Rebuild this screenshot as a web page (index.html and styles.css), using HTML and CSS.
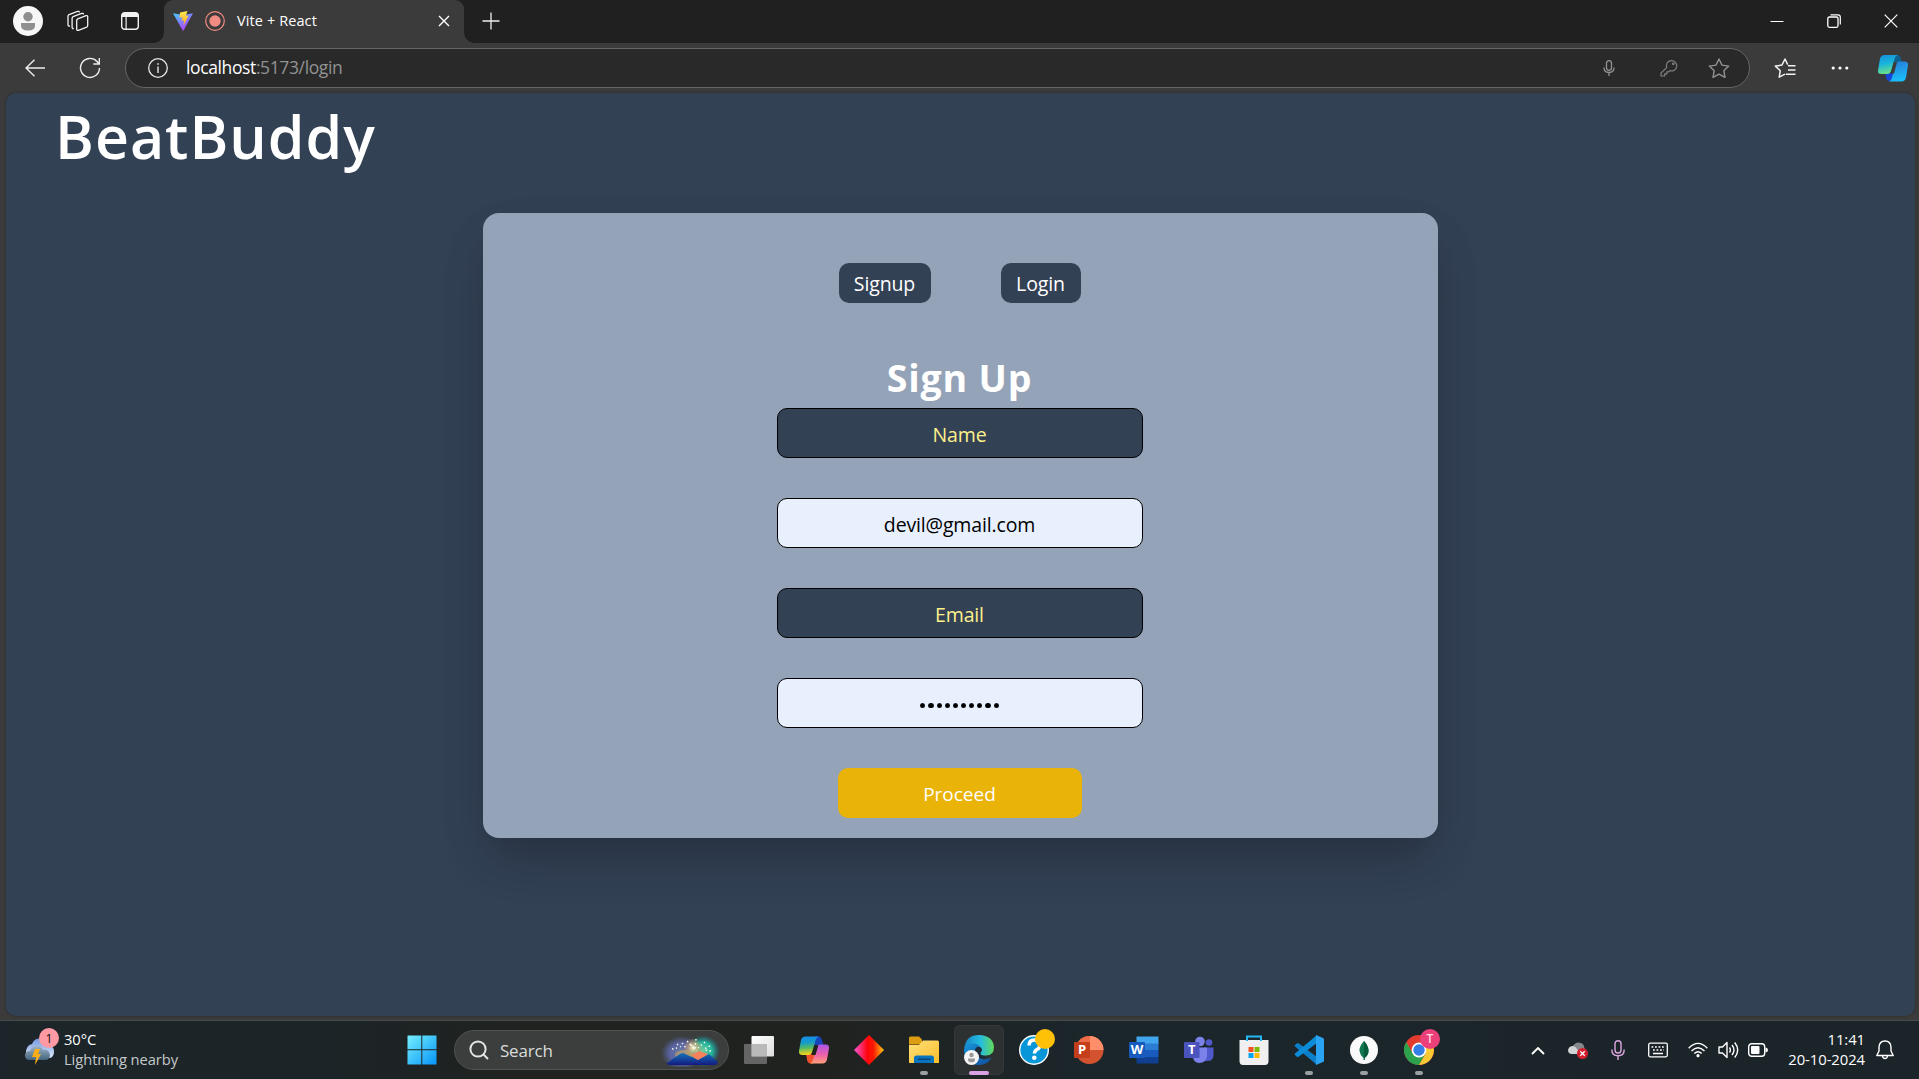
FILE: index.html
```html
<!DOCTYPE html>
<html lang="en">
<head>
<meta charset="utf-8">
<title>Vite + React</title>
<link rel="stylesheet" href="styles.css">
</head>
<body>
<div class="screen">
  <header class="tabstrip">
    <svg class="avatar" width="30" height="30" viewBox="0 0 30 30"><circle cx="15" cy="15" r="15" fill="#f7f7f7"/><circle cx="15" cy="10.700" r="4.700" fill="#8f8f8f"/><path d="M8 17h14v2.500q0 5-7 5t-7-5z" fill="#8f8f8f"/></svg>
    <svg class="workspaces" width="22" height="22" viewBox="0 0 22 22" fill="none" stroke="#f2f2f2" stroke-width="1.300" stroke-linejoin="round"><path d="M9.700 10.500q0-1.200 1-1.700l8.300-3.100q1.700-.5 1.700 1v8.800q0 1.200-1 1.700l-8.300 3.100q-1.700.5-1.700-1z"/><path d="M6.800 18.500q-1.700.3-1.700-1V8.300q0-1.200 1-1.700l8.600-3.200q1.700-.5 1.700 1"/><path d="M3 16q-2 .2-2-1V6.300q0-1.200 1-1.700l8.600-3.200q1.700-.5 1.700 1"/></svg>
    <svg class="tabmenu" width="18" height="18" viewBox="0 0 18 18"><rect x=".7" y=".7" width="16.600" height="16.600" rx="3" fill="none" stroke="#f2f2f2" stroke-width="1.400"/><path d="M1 5V3q0-2 2-2h12q2 0 2 2v2zM4.500 5h1.200v12H4.500z" fill="#f2f2f2"/></svg>
    <div class="tab">
      <svg width="20" height="20" viewBox="0 0 20 20"><defs><linearGradient id="va" x2=".7" y2="1"><stop stop-color="#41d1ff"/><stop offset="1" stop-color="#bd34fe"/></linearGradient><linearGradient id="vb" x2="0" y2="1"><stop stop-color="#ffea55"/><stop offset="1" stop-color="#ffa51a"/></linearGradient></defs><path d="M0 2.200l10 1.700 10-1.700L10.500 19.600h-.8z" fill="url(#va)"/><path d="M7 1.500L14.500 0l-1.700 4.800 2.800-.4-5 10 .4-5-2.500.4 1-3.600-3 .6z" fill="url(#vb)"/></svg>
      <svg class="record" width="20" height="20" viewBox="0 0 20 20"><circle cx="10" cy="10" r="9.300" fill="none" stroke="#f28b82" stroke-width="1.200"/><circle cx="10" cy="10" r="5.700" fill="#f28b82"/></svg>
      <span class="tab-title">Vite + React</span>
      <svg class="tab-close" width="12" height="12" viewBox="0 0 12 12"><path d="M1 1l10 10M11 1L1 11" stroke="#fff" stroke-width="1.400"/></svg>
    </div>
    <svg class="newtab" width="18" height="18" viewBox="0 0 18 18"><path d="M9 .5v17M.5 9h17" stroke="#eee" stroke-width="1.300"/></svg>
    <div class="winbuttons">
      <svg width="14" height="14" viewBox="0 0 14 14"><path d="M.5 7.500h13" stroke="#fff"/></svg>
      <svg width="14" height="14" viewBox="0 0 14 14" fill="none" stroke="#fff"><rect x=".8" y="3" width="10.200" height="10.300" rx="1.500" stroke-width="1.300"/><path d="M3.500.8H11q2.300 0 2.300 2.300v7.500" stroke-width="1.200"/></svg>
      <svg width="14" height="14" viewBox="0 0 14 14"><path d="M.7.700l12.600 12.600M13.300.700L.7 13.300" stroke="#fff" stroke-width="1.200"/></svg>
    </div>
  </header>
  <nav class="toolbar">
    <svg class="back" width="20" height="18" viewBox="0 0 20 18" fill="none" stroke="#eee" stroke-width="1.400"><path d="M20 9H1M9.500.7L1 9l8.500 8.300"/></svg>
    <svg class="reload" width="22" height="22" viewBox="0 0 22 22" fill="none" stroke="#eee" stroke-width="1.400"><path d="M20.500 11a9.500 9.500 0 1 1-2.500-6.500l2 2.200M20.300 1v6h-6"/></svg>
    <div class="address">
      <svg class="info" width="20" height="20" viewBox="0 0 20 20"><circle cx="10" cy="10" r="9.300" fill="none" stroke="#e6e6e6" stroke-width="1.300"/><path d="M9.300 8.500h1.400V15H9.300zM9.200 5.200h1.600v1.600H9.200z" fill="#e6e6e6"/></svg>
      <span class="url"><b>localhost</b>:5173/login</span>
      <div class="address-icons">
        <svg class="mic" width="12" height="16" viewBox="0 0 12 16" fill="none" stroke="#929292" stroke-width="1.300"><rect x="3.500" y=".7" width="5" height="9.600" rx="2.500"/><path d="M1 7.500q0 5 5 5t5-5M6 12.500V16"/></svg>
        <svg class="key" width="18" height="18" viewBox="0 0 18 18" fill="none" stroke="#808080" stroke-width="1.200" stroke-linejoin="round"><path d="M6.700 8.600a5.200 5.200 0 1 1 3 3L8.500 12.800H6.800v2H4.700V17H1v-3z"/><circle cx="13.300" cy="4.800" r=".8"/></svg>
        <svg class="star" width="22" height="20" viewBox="0 0 22 20" fill="none" stroke="#929292" stroke-width="1.400" stroke-linejoin="round"><path d="M11 1l3 6.100 6.700 1-4.900 4.600 1.200 6.600-6-3.200-6 3.200 1.200-6.600L1.300 8.100l6.700-1z"/></svg>
      </div>
    </div>
    <svg class="favs" width="22" height="20" viewBox="0 0 22 20" fill="none" stroke="#f2f2f2" stroke-width="1.500" stroke-linejoin="round"><path d="M11 16.200l-5.800 3 1.100-6.500L1.400 8.100l6.500-1L11 1l2.700 5.600M14 7.800h7.500M14 12h7.500M11.800 16.200h9.700"/></svg>
    <svg class="dots" width="18" height="6" viewBox="0 0 18 6" fill="#fff"><circle cx="2.200" cy="3" r="1.600"/><circle cx="9" cy="3" r="1.600"/><circle cx="15.800" cy="3" r="1.600"/></svg>
    <svg class="copilot" width="32" height="28" viewBox="0 0 32 28"><defs><linearGradient id="ca" x2=".2" y2="1"><stop stop-color="#168fd9"/><stop offset=".5" stop-color="#18b4dd"/><stop offset="1" stop-color="#68de8b"/></linearGradient><linearGradient id="cb" x2=".2" y2="1"><stop stop-color="#287bd8"/><stop offset="1" stop-color="#1bbdf8"/></linearGradient></defs><path d="M16 1h4q3 0 3.800 3L25 8h-9z" fill="#0c618e"/><path d="M8 19h9l-2 8h-2.500q-2.500 0-3.300-3z" fill="#1846d7"/><path d="M7.500 1H21q-3 1-3.500 4l-3 11q-1 4-4.500 4H4.500Q.5 20 1 16.500L3 4.500Q4 1 7.500 1z" fill="url(#ca)"/><path d="M22.500 7.500h5q4 0 3.500 4l-2 12q-1 4-4.500 4H12q2.500-1 3-4l3-12q1-4 4.500-4z" fill="url(#cb)"/><path d="M16.700 8.500h3.300l-3 11h-3.600z" fill="#3b3b3b"/></svg>
  </nav>
  <main class="page">
    <h1 class="brand">BeatBuddy</h1>
    <section class="card">
      <div class="switch"><button class="pill signup">Signup</button><button class="pill login">Login</button></div>
      <h2 class="heading">Sign Up</h2>
      <form class="form">
        <div class="field dark name">Name</div>
        <div class="field light mail">devil@gmail.com</div>
        <div class="field dark email">Email</div>
        <div class="field light secret"><i></i><i></i><i></i><i></i><i></i><i></i><i></i><i></i><i></i><i></i></div>
        <button class="proceed" type="button">Proceed</button>
      </form>
    </section>
  </main>
  <footer class="taskbar">
    <div class="weather">
      <div class="weather-icon">
        <svg width="32" height="30" viewBox="0 0 32 30"><defs><linearGradient id="wa" x2="0" y2="1"><stop stop-color="#7798df"/><stop offset="1" stop-color="#dce9fa"/></linearGradient><linearGradient id="wb" x2="0" y2="1"><stop stop-color="#9eb4c8"/><stop offset="1" stop-color="#45657e"/></linearGradient></defs><path d="M2 14Q3 8 8 7q3-7 11-5 5 1 6 6 6 2 5 8-1 5-5 5H8q-7 0-6-7z" fill="url(#wa)"/><path d="M6 23q-5 0-5-4.500T6 14q2-5 7-5 4 0 6 4 6-1 7 5 0 5-5 5z" fill="url(#wb)"/><path d="M11 12h5l-2 5h3l-6 11 1-8H8z" fill="#ffae18"/></svg>
        <span class="badge">1</span>
      </div>
      <div class="weather-text"><span class="temp">30°C</span><span class="cond">Lightning nearby</span></div>
    </div>
    <div class="apps">
      <div class="app start"><svg width="30" height="30" viewBox="0 0 30 30"><defs><linearGradient id="wi" x2="1" y2="1"><stop stop-color="#74efff"/><stop offset="1" stop-color="#0795f7"/></linearGradient></defs><path d="M1 .5h13.300v13.800H.5V1zM15.300.5H29.500v13.800H15.300zM.5 15.300h13.800v14.200H.5zM15.300 15.300h14.200v14.200H15.300z" fill="url(#wi)"/></svg></div>
      <div class="search">
        <svg width="20" height="20" viewBox="0 0 20 20" fill="none" stroke="#e3e5e5" stroke-width="2"><circle cx="9" cy="9" r="7.600"/><path d="M14 14l5 5"/></svg>
        <span>Search</span>
        <svg class="fireworks" width="58" height="32" viewBox="0 0 58 32"><defs><radialGradient id="f1"><stop stop-color="#6d7fa8"/><stop offset=".6" stop-color="#5a62a0"/><stop offset="1" stop-color="#526298" stop-opacity="0"/></radialGradient><radialGradient id="f2"><stop stop-color="#6fcfa0"/><stop offset=".55" stop-color="#23b39b"/><stop offset="1" stop-color="#1a7e95" stop-opacity="0"/></radialGradient><radialGradient id="f4"><stop stop-color="#fff0c8"/><stop offset=".5" stop-color="#e6b076" stop-opacity=".6"/><stop offset="1" stop-color="#e09a60" stop-opacity="0"/></radialGradient><linearGradient id="f3" x2="0" y2="1"><stop stop-color="#1272b8"/><stop offset="1" stop-color="#141a80"/></linearGradient></defs><ellipse cx="20" cy="18" rx="21" ry="17" fill="url(#f1)"/><ellipse cx="41" cy="16" rx="17" ry="16" fill="url(#f2)"/><ellipse cx="31" cy="13" rx="10" ry="10" fill="url(#f4)"/><ellipse cx="22" cy="20" rx="9" ry="5" fill="#d8ae55" opacity=".5"/><path d="M29 20l8 7 9-8-9-3z" fill="#f5825c"/><path d="M4 29l8-6 6-4 3-1 15 7 11-6 9 8q-1 3-4 3H8q-3 0-4-2z" fill="url(#f3)"/><path d="M25 6l7 7M34 4l-1 9M43 7l-7 6M48 11l-6 3M49 16l-6-1M15 9l4 3M10 14l5-1M20 8l4 5M29 10l6 6" stroke="#f5fff2" stroke-width="1.400" stroke-dasharray="1.500 2.500"/></svg>
      </div>
      <div class="app first"><svg width="30" height="28" viewBox="0 0 30 28"><defs><linearGradient id="ta" x2="1" y2="1"><stop stop-color="#fff"/><stop offset="1" stop-color="#ddd"/></linearGradient></defs><rect x="7.500" width="22.500" height="20.500" rx="1" fill="url(#ta)"/><rect y="8" width="23" height="20" rx="1" fill="#777" fill-opacity=".8"/><path d="M7.500 8H23v12.500H7.500z" fill="#b9b9b9"/></svg></div>
      <div class="app"><svg width="32" height="28" viewBox="0 0 32 28"><defs><linearGradient id="co1" x2=".1" y2="1"><stop stop-color="#168de9"/><stop offset=".35" stop-color="#139acc"/><stop offset=".65" stop-color="#55bb62"/><stop offset="1" stop-color="#f7d51d"/></linearGradient><linearGradient id="co2" x2="0" y2="1"><stop stop-color="#ad55e8"/><stop offset=".55" stop-color="#ed62a7"/><stop offset="1" stop-color="#ffa078"/></linearGradient></defs><path d="M16 .5h4q3 0 3.800 3L25.500 9H16z" fill="#1844ba"/><path d="M8 18h9l-2 9.500h-2.500q-2.500 0-3.300-3z" fill="#f0512a"/><path d="M7.500.5H21q-3 1-3.500 4L14.500 15q-1 4-4.500 4H4.500Q.5 19 1 15L3 4Q4 .5 7.500.5z" fill="url(#co1)"/><path d="M22.500 8.500h5q4 0 3.500 4l-2 11q-1 4-4.500 4H12q2.500-1 3-4l3-11q1-4 4.500-4z" fill="url(#co2)"/><path d="M16.500 9.500h3.800l-2.800 9.500h-4z" fill="#20241f"/></svg></div>
      <div class="app"><svg width="30" height="30" viewBox="0 0 30 30"><defs><linearGradient id="di"><stop stop-color="#fa55db"/><stop offset=".45" stop-color="#ff050b"/><stop offset=".65" stop-color="#fa1a00"/><stop offset="1" stop-color="#ffcd13"/></linearGradient></defs><path d="M15 0l15 15-15 15L0 15z" fill="url(#di)"/></svg></div>
      <div class="app"><svg width="30" height="28" viewBox="0 0 30 28"><defs><linearGradient id="fo" x2="1" y2="1"><stop stop-color="#ffe17b"/><stop offset="1" stop-color="#f9bd2b"/></linearGradient></defs><path d="M0 2q0-1.500 1.500-1.500H10l3 3v5H0z" fill="#dd9d12"/><path d="M0 9h10l4-4.500h14.500q1.500 0 1.500 1.500V27H0z" fill="url(#fo)"/><path d="M5 27v-5q0-2.500 2.500-2.500h15Q25 19.500 25 22v5z" fill="#0874be"/><path d="M9 22.500h12.500v1.500H9z" fill="#06477f"/></svg><span class="run"></span></div>
      <div class="app"><div class="active"></div><svg width="30" height="30" viewBox="0 0 30 30"><defs><linearGradient id="ed" x2="1"><stop stop-color="#1787c9"/><stop offset=".55" stop-color="#26bce0"/><stop offset="1" stop-color="#61da56"/></linearGradient><linearGradient id="ee" x2="1" y2="1"><stop stop-color="#1598df"/><stop offset="1" stop-color="#144c98"/></linearGradient></defs><path d="M0 15Q1 7 9 7q9 0 9 8l-4 4q1 5 8 5 3 0 5.500-1.500Q24 30 15 30 1 30 0 15z" fill="url(#ee)"/><path d="M.3 13Q2 0 15 0q14 .5 15 12 0 8.500-8 8.500-6 0-6-2 2-2 1-5-2-5-8-5-6 0-8.700 4.500z" fill="url(#ed)"/><path d="M11 15q1-3.500 4-3.200 3 .7 3 4-2 2-1.500 3.200 1 2 5 2l-1 3.500q-9-1-9.500-9.500z" fill="#1e2b38"/><circle cx="7.500" cy="22.500" r="7.500" fill="#f5f5f5"/><circle cx="7.500" cy="20" r="2.200" fill="#999"/><path d="M4 23.500h7v1.200q0 2.600-3.500 2.600T4 24.700z" fill="#999"/></svg><span class="run selected"></span></div>
      <div class="app"><svg width="36" height="36" viewBox="0 0 36 36"><circle cx="15" cy="21" r="14.300" fill="#0796d7" stroke="#fff" stroke-width="1.400"/><path d="M10 16.500Q10 11 15.500 11t5.500 5q0 3-3 4.500-2.500 1.400-2.500 4" fill="none" stroke="#fff" stroke-width="3.500"/><circle cx="15.300" cy="28.800" r="2.300" fill="#fff"/><circle cx="26" cy="10" r="10" fill="#ffc107"/></svg></div>
      <div class="app"><svg width="30" height="28" viewBox="0 0 30 28"><circle cx="15.500" cy="14" r="14" fill="#d35230"/><path d="M15.500 0a14 14 0 0 1 14 14h-14z" fill="#ff8f6b"/><path d="M15.500 0v14h-14a14 14 0 0 1 14-14z" fill="#ed6c47"/><rect y="6" width="16" height="16" rx="1" fill="#c43e1c"/><text class="glyph" x="8" y="18.200" text-anchor="middle">P</text></svg></div>
      <div class="app"><svg width="30" height="28" viewBox="0 0 30 28"><path d="M7.500.5h22V8h-22z" fill="#41a5ee"/><path d="M7.500 7.500h22V14h-22z" fill="#2b7cd3"/><path d="M7.500 14h22v7h-22z" fill="#185abd"/><path d="M7.500 21h22v6.500h-22z" fill="#103f91"/><rect y="6" width="16" height="16" rx="1" fill="#185abd"/><text class="glyph" x="8" y="18" text-anchor="middle">W</text></svg></div>
      <div class="app"><svg width="30" height="28" viewBox="0 0 30 28"><circle cx="16" cy="5.500" r="4.800" fill="#7b83eb"/><circle cx="25" cy="6.500" r="3.300" fill="#5059c9"/><path d="M20 11.500h9.500V20q-.5 5-6 5H20z" fill="#5059c9"/><path d="M9 11.500h14V20q-1 7-7.500 7T9 20z" fill="#7b83eb"/><rect y="6" width="15.500" height="16" rx="1" fill="#4b53bc"/><text class="glyph" x="7.800" y="18.200" text-anchor="middle">T</text></svg></div>
      <div class="app"><svg width="30" height="30" viewBox="0 0 30 30"><path d="M.5 5h29v21q0 4-3.500 4H4Q.5 30 .5 26z" fill="#f0f0f0"/><path d="M8 6V1.500h14V6" fill="none" stroke="#25b7f3" stroke-width="2"/><path d="M9.500 12h5v5h-5z" fill="#f25022"/><path d="M15.500 12h5v5h-5z" fill="#7fba00"/><path d="M9.500 18h5v5h-5z" fill="#00a4ef"/><path d="M15.500 18h5v5h-5z" fill="#ffb900"/></svg></div>
      <div class="app"><svg width="30" height="30" viewBox="0 0 30 30"><path d="M1 10l2-1.800q.8-.5 1.600 0L23 22v8L1 11.500q-.8-.8 0-1.500z" fill="#0d7fc9"/><path d="M1 20l2 1.800q.8.500 1.600 0L23 8V0L1 18.500q-.8.800 0 1.500z" fill="#0c8cd8"/><path d="M22 0l7 3q1 .6 1 1.600v20.800q0 1-1 1.600l-7 3z" fill="#2aa3f2"/></svg><span class="run"></span></div>
      <div class="app"><svg width="28" height="28" viewBox="0 0 28 28"><circle cx="14" cy="14" r="14" fill="#fafafa"/><path d="M14 5q-5 5.500-4.500 10 .5 4 4 7V24h1v-2q4-3 4-7 0-5-4.500-10z" fill="#10774e"/><path d="M14 5v19h.6v-2q4-3 3.900-7 0-5-4.500-10z" fill="#075c3b"/></svg><span class="run"></span></div>
      <div class="app"><svg width="36" height="36" viewBox="0 0 36 36"><circle cx="15" cy="21" r="15" fill="#e33b2e"/><path d="M2.300 13A15 15 0 0 0 15 36l6.800-12L9 25z" fill="#2ca24c"/><path d="M15 14h13.200A15 15 0 0 1 15 36l7-12z" fill="#fcc934"/><circle cx="15" cy="21" r="7.400" fill="#fff"/><circle cx="15" cy="21" r="5.700" fill="#357ee8"/><circle cx="26" cy="10" r="10" fill="#ec407a"/><text class="profile" x="26" y="14.200" text-anchor="middle">T</text></svg><span class="run"></span></div>
    </div>
    <div class="tray">
      <svg class="chev" width="14" height="9" viewBox="0 0 14 9" fill="none" stroke="#fff" stroke-width="1.900"><path d="M1 8l6-6 6 6"/></svg>
      <svg class="cloud" width="20" height="18" viewBox="0 0 20 18"><path d="M1 9q1-3 4-4Q8 0 13 2q3 1 3 4 2 2 1 5L7 13z" fill="#848a8c"/><path d="M4 13q-4 0-4-4 1-4 5-4 2 0 4 3l4 5z" fill="#d1d4d5"/><circle cx="14.500" cy="12.500" r="5.500" fill="#d51e2e"/><path d="M12.300 10.300l4.400 4.400m0-4.400l-4.400 4.400" stroke="#fff" stroke-width="1.300"/></svg>
      <svg class="tmic" width="14" height="20" viewBox="0 0 14 20" fill="none" stroke="#dba5df" stroke-width="1.400"><rect x="4" y=".7" width="6" height="12.300" rx="3"/><path d="M.8 9.500q0 6.300 6.200 6.300t6.200-6.300M7 16v4"/></svg>
      <svg class="kbd" width="20" height="16" viewBox="0 0 20 16" fill="none" stroke="#fff" stroke-width="1.300"><rect x=".7" y="1.200" width="18.600" height="13.600" rx="1.500"/><path d="M3.500 5h13M5 8h11" stroke-dasharray="1.800 1.700" stroke-width="1.600"/><path d="M5 11.500h10" stroke-width="1.500"/></svg>
      <svg class="wifi" width="20" height="16" viewBox="0 0 20 16" fill="none" stroke="#fff" stroke-width="1.400"><path d="M.7 6.200q9.300-9.600 18.600 0M3.500 9q6.500-6.600 13 0M6.300 11.600q3.700-3.500 7.400 0"/><circle cx="10" cy="13.700" r="1.600" fill="#fff" stroke="none"/></svg>
      <svg class="sound" width="21" height="18" viewBox="0 0 21 18" fill="none" stroke="#fff" stroke-width="1.400" stroke-linejoin="round"><path d="M1 6h3.500L9 1.500v15L4.500 12H1zM11.500 6.500q1.800 2.500 0 5M14 4q4 5 0 10M16.700 1.500q6 7.500 0 15"/></svg>
      <svg class="battery" width="20" height="14" viewBox="0 0 20 14"><rect x=".7" y=".7" width="16" height="12.600" rx="3" fill="none" stroke="#fff" stroke-width="1.400"/><rect x="3" y="3" width="8.500" height="8" rx="1" fill="#fff"/><path d="M17.500 4.500q2.500.3 2.500 2.500t-2.500 2.500z" fill="#fff"/></svg>
      <div class="clock"><span class="time">11:41</span><span class="date">20-10-2024</span></div>
      <svg class="bell" width="18" height="20" viewBox="0 0 18 20" fill="none" stroke="#fff" stroke-width="1.400" stroke-linejoin="round"><path d="M3 7.200Q3.300 1 9 1t6 6.200V11l2.200 4.500H.8L3 11zM6.500 16q.3 2.500 2.500 2.500t2.500-2.500"/></svg>
    </div>
  </footer>
</div>
</body>
</html>
```
FILE: styles.css
```css
* { box-sizing: border-box; }
body { margin: 0; overflow: hidden; font-family: "Open Sans", "Noto Sans", sans-serif; background: #3b3b3b; }
svg { display: block; flex: none; }
.screen { width: 1919px; height: 1079px; display: flex; flex-direction: column; background: #3b3b3b; }

.tabstrip { height: 43px; flex: none; display: flex; align-items: center; padding-bottom: 1px; background: #202020; }
.avatar { margin-left: 13px; }
.workspaces { margin-left: 24px; }
.tabmenu { margin-left: 32px; }
.tab { position: relative; width: 300px; height: 43px; margin: 0 0 -1px 25px; padding: 0 14px 1px 9px; display: flex; align-items: center; background: #3b3b3b; border-radius: 9px 9px 0 0; }
.tab::before, .tab::after { content: ""; position: absolute; bottom: 0; width: 10px; height: 10px; }
.tab::before { left: -10px; background: radial-gradient(circle at 0 0, transparent 9.500px, #3b3b3b 10px); }
.tab::after { right: -10px; background: radial-gradient(circle at 100% 0, transparent 9.500px, #3b3b3b 10px); }
.record { margin-left: 12px; }
.tab-title { margin-left: 12px; font-size: 14.500px; line-height: 18px; padding-bottom: 1px; color: #fff; letter-spacing: .1px; white-space: nowrap; }
.tab-close { margin-left: auto; }
.newtab { margin-left: 18px; }
.winbuttons { margin-left: auto; margin-right: 21px; display: flex; gap: 43px; }

.toolbar { height: 50px; flex: none; display: flex; align-items: center; }
.toolbar > svg { margin-bottom: 1px; }
.toolbar .back { margin-left: 25px; }
.toolbar .reload { margin-left: 34px; }
.address { width: 1625px; height: 40px; margin-left: 24px; padding: 0 0 1px 22px; display: flex; align-items: center; background: #292929; border: 1px solid #666; border-radius: 20px; }
.url { margin-left: 18px; font-size: 17.500px; line-height: 24px; padding-bottom: 1px; letter-spacing: -.38px; color: #929292; white-space: nowrap; }
.url b { font-weight: 400; color: #fff; }
.address-icons { margin-left: auto; margin-right: 19px; display: flex; align-items: center; }
.key { margin-left: 45px; }
.star { margin-left: 30px; }
.favs { margin-left: 24px; }
.dots { margin-left: 35px; }
.copilot { margin-left: 28px; }

.page { width: 1909px; height: 923px; flex: none; margin-left: 6px; display: flex; flex-direction: column; align-items: center; background: #334155; border-radius: 10px; overflow: hidden; box-shadow: 0 0 3px rgba(0, 0, 0, .3); }
.brand { align-self: flex-start; width: 330px; height: 80px; margin: 3px 0 0 49px; font-size: 59px; line-height: 80px; font-weight: 600; letter-spacing: 1px; color: #fff; white-space: nowrap; }
.card { width: 955px; height: 625px; flex: none; margin-top: 37px; padding: 50px 2px 0 0; display: flex; flex-direction: column; align-items: center; background: #94a3b8; border-radius: 16px; box-shadow: 0 25px 50px -12px rgba(0, 0, 0, .25), 0 20px 50px rgba(0, 0, 0, .06); }
.switch { display: flex; gap: 70px; }
.pill { height: 40px; padding: 1px 0 0; border: 0; border-radius: 10px; background: #334155; color: #fff; font: 19.500px/39px "Open Sans", sans-serif; letter-spacing: -.12px; }
.signup { width: 92px; }
.login { width: 80px; }
.heading { height: 60px; margin: 45px 0 0; font-size: 37.500px; line-height: 59px; font-weight: 700; letter-spacing: .8px; color: #fff; white-space: nowrap; }
.form { display: flex; flex-direction: column; align-items: center; gap: 40px; }
.field { width: 366px; height: 50px; padding-top: 4px; display: flex; align-items: center; justify-content: center; border: 1px solid #000; border-radius: 10px; font-size: 19.500px; line-height: 28px; letter-spacing: -.15px; }
.dark { background: #334155; color: #fef08a; }
.light { background: #e8f0fe; color: #000; }
.secret { gap: 3px; padding-top: 5px; }
.secret i { width: 5.150px; height: 5.200px; border-radius: 50%; background: #000; }
.proceed { width: 244px; height: 50px; padding: 1px 0 0; border: 0; border-radius: 10px; background: #eab308; color: #fff; font: 19px/28px "Open Sans", sans-serif; }

.taskbar { height: 59px; flex: none; margin-top: 4px; display: flex; align-items: center; border-top: 1px solid #494c4d; background: linear-gradient(90deg, #1c2529 0, #1c2427 17%, #20221f 28%, #20221f 43%, #1b262b 57%, #1b2428 100%); color: #fff; }
.weather { width: 394px; display: flex; padding-bottom: 2px; }
.weather-icon { position: relative; width: 34px; height: 36px; margin-left: 24px; padding-top: 8px; }
.badge { position: absolute; left: 15px; top: -1px; width: 20px; height: 20px; border-radius: 50%; background: #ff99a4; color: #151515; font-size: 13px; line-height: 20px; text-align: center; }
.weather-text { margin-left: 6px; display: flex; flex-direction: column; font-size: 14.700px; line-height: 20px; letter-spacing: -.05px; white-space: nowrap; }
.cond { color: #c5c8c9; }
.temp, .cond { align-self: flex-start; }
.apps { height: 58px; display: flex; align-items: center; }
.app { position: relative; width: 55px; height: 58px; display: flex; align-items: center; justify-content: center; }
.app > svg { position: relative; }
.app > svg[width="36"] { left: 3px; top: -3px; }
.active { position: absolute; left: 3px; top: 4px; width: 50px; height: 50px; border-radius: 6px; background: #2d3131; border: 1px solid #333839; }
.run { position: absolute; left: 24px; bottom: 4px; width: 8px; height: 4px; border-radius: 2px; background: #9aa0a2; }
.selected { left: 18px; width: 20px; background: #d9a2e5; }
.glyph { font: 700 13px "Open Sans", sans-serif; fill: #fff; }
.profile { font: 600 12px "Open Sans", sans-serif; fill: #ffd6e3; }
.search { width: 275px; height: 40px; margin-left: 5px; padding: 0 8px 0 14px; display: flex; align-items: center; border: 1px solid #505353; border-radius: 20px; background: #3b3e3d; color: #dadcdc; font-size: 17px; letter-spacing: -.2px; }
.search span { margin-left: 11px; line-height: 24px; padding-top: 1px; white-space: nowrap; }
.fireworks { margin-left: auto; align-self: flex-end; margin-bottom: 2px; }
.first { margin-left: 2px; }
.tray { margin-left: auto; display: flex; align-items: center; padding-right: 25px; }
.cloud { margin-left: 23px; }
.tmic { margin-left: 23px; }
.kbd { margin-left: 23px; }
.wifi { margin-left: 20px; }
.sound { margin-left: 10px; }
.battery { margin-left: 9px; }
.clock { width: 86px; margin-left: 11px; padding-bottom: 2px; display: flex; flex-direction: column; align-items: flex-end; font-size: 14.800px; line-height: 20px; letter-spacing: -.05px; white-space: nowrap; }
.bell { margin-left: 11px; }
```
